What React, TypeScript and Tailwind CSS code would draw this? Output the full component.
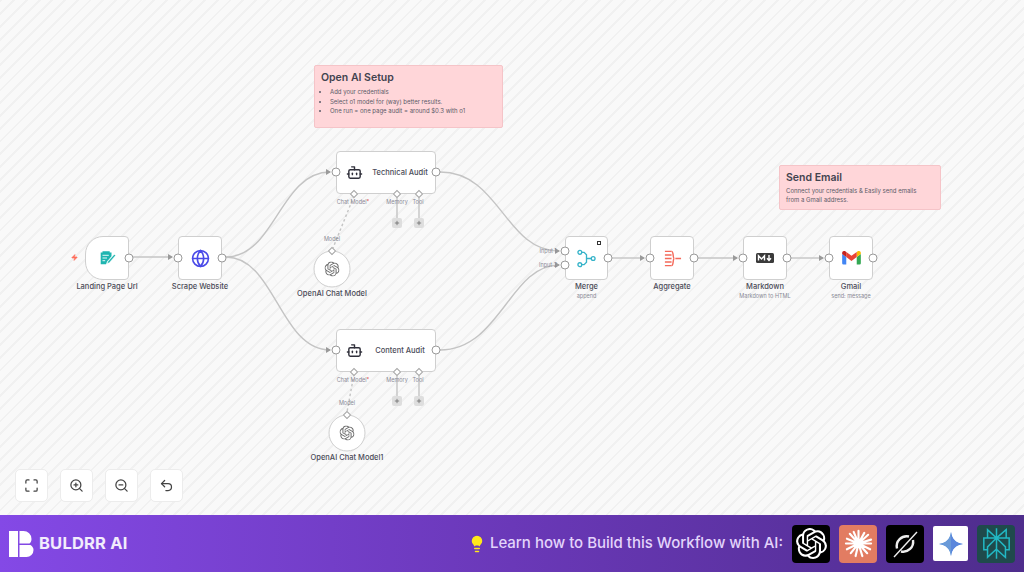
import React from 'react';
import { Maximize, ZoomIn, ZoomOut, Undo2, Plus, Globe, Bot, Zap, Lightbulb } from 'lucide-react';
import { SiOpenai, SiPerplexity } from 'react-icons/si';

const FONT = "font-['Inter','Liberation_Sans',sans-serif]";

const Port = ({ x, y }: { x: number; y: number }) => (
  <div className="absolute w-[9px] h-[9px] rounded-full bg-white border border-[#9a9a9a] -translate-x-1/2 -translate-y-1/2" style={{ left: x, top: y }} />
);

const Diamond = ({ x, y }: { x: number; y: number }) => (
  <div className="absolute w-[6px] h-[6px] rotate-45 bg-white border border-[#a3a3a3] -translate-x-1/2 -translate-y-1/2" style={{ left: x, top: y }} />
);

const Small = ({ x, y, children }: { x: number; y: number; children: React.ReactNode }) => (
  <div className="absolute -translate-x-1/2 -translate-y-1/2 whitespace-nowrap text-[5.5px] text-[#8a8a96]" style={{ left: x, top: y }}>
    {children}
  </div>
);

const Label = ({ x, y, children }: { x: number; y: number; children: React.ReactNode }) => (
  <div className="absolute -translate-x-1/2 -translate-y-1/2 whitespace-nowrap text-[7.5px] font-medium text-[#4b4b58]" style={{ left: x, top: y }}>
    {children}
  </div>
);

const Box = ({ x, w = 44, children, sub, title, first }: { x: number; w?: number; children: React.ReactNode; title: string; sub?: string; first?: boolean }) => (
  <>
    <div
      className={`absolute top-[236px] h-[44px] bg-white border border-[#cfcfcf] flex items-center justify-center ${first ? 'rounded-l-[18px] rounded-r-[4px]' : 'rounded-[4px]'}`}
      style={{ left: x, width: w }}
    >
      {children}
    </div>
    <Label x={x + w / 2} y={287}>{title}</Label>
    {sub && <Small x={x + w / 2} y={296}>{sub}</Small>}
  </>
);

const Audit = ({ y, title }: { y: number; title: string }) => (
  <>
    <div className="absolute left-[336px] w-[100px] h-[43px] bg-white border border-[#cfcfcf] rounded-[4px] flex items-center" style={{ top: y }}>
      <Bot className="w-[17px] h-[17px] ml-[9px] text-[#2f2f3a]" strokeWidth={2} />
      <span className="ml-[8px] flex-1 text-center pr-[6px] text-[7.5px] font-medium text-[#4b4b58]">{title}</span>
    </div>
    <Port x={336} y={y + 21} />
    <Port x={436} y={y + 21} />
    <Diamond x={354} y={y + 43} />
    <Diamond x={397} y={y + 43} />
    <Diamond x={419} y={y + 43} />
    <Small x={353} y={y + 51}>Chat Model<span className="text-[#e5484d]">*</span></Small>
    <Small x={397} y={y + 51}>Memory</Small>
    <Small x={418} y={y + 51}>Tool</Small>
    <div className="absolute w-[10px] h-[10px] rounded-[2px] bg-[#dedede] flex items-center justify-center" style={{ left: 392, top: y + 67 }}>
      <Plus className="w-[6px] h-[6px] text-[#666]" strokeWidth={3} />
    </div>
    <div className="absolute w-[10px] h-[10px] rounded-[2px] bg-[#dedede] flex items-center justify-center" style={{ left: 414, top: y + 67 }}>
      <Plus className="w-[6px] h-[6px] text-[#666]" strokeWidth={3} />
    </div>
  </>
);

const ChatModel = ({ cx, cy, title }: { cx: number; cy: number; title: string }) => (
  <>
    <div className="absolute w-[37px] h-[37px] rounded-full bg-white border border-[#cfcfcf] flex items-center justify-center -translate-x-1/2 -translate-y-1/2" style={{ left: cx, top: cy }}>
      <SiOpenai className="w-[15px] h-[15px] text-[#6b6b6b]" />
    </div>
    <Diamond x={cx} y={cy - 18} />
    <Small x={cx} y={cy - 30}>Model</Small>
    <Label x={cx} y={cy + 25}>{title}</Label>
  </>
);

const ToolButton = ({ children }: { children: React.ReactNode }) => (
  <button className="w-[33px] h-[33px] bg-white border border-[#ececec] rounded-[5px] flex items-center justify-center text-[#444]">
    {children}
  </button>
);

const Edges = () => (
  <svg className="absolute left-0 top-0 w-[1024px] h-[515px]" viewBox="0 0 1024 515" fill="none">
    <g stroke="#c4c4c4" strokeWidth="1.4">
      <path d="M133 257H172" />
      <path d="M226 257C275 257 280 172 330 172" />
      <path d="M226 257C275 257 280 350 330 350" />
      <path d="M440 172C500 172 505 251 559 251" />
      <path d="M440 350C500 350 510 265 559 265" />
      <path d="M612 258H644" />
      <path d="M698 258H737" />
      <path d="M791 258H823" />
      <path d="M397 196V218" />
      <path d="M419 196V218" />
      <path d="M397 374V396" />
      <path d="M419 374V396" />
      <path d="M354 196L333 248" strokeDasharray="2.5 2.5" />
      <path d="M354 374L347 412" strokeDasharray="2.5 2.5" />
    </g>
    <g fill="#9a9a9a">
      <path d="M331 172l-5-3v6z" />
      <path d="M331 350l-5-3v6z" />
      <path d="M173 257l-5-3v6z" />
      <path d="M560 251l-5-3v6z" />
      <path d="M560 265l-5-3v6z" />
      <path d="M645 258l-5-3v6z" />
      <path d="M738 258l-5-3v6z" />
      <path d="M824 258l-5-3v6z" />
    </g>
  </svg>
);

export default function App() {
  return (
    <div className={`w-[1024px] h-[572px] flex flex-col overflow-hidden ${FONT}`}>
      <div className="relative flex-1 bg-[#f8f8f8] bg-[repeating-linear-gradient(135deg,#f1f1f1_0px,#f1f1f1_2px,#f9f9f9_2px,#f9f9f9_9px)]">
        {/* sticky notes */}
        <div className="absolute left-[314px] top-[65px] w-[189px] h-[63px] bg-[#ffd6d9] border border-[#f5c4c8] rounded-[2px] pl-[6px] pt-[5px]">
          <div className="text-[10.5px] leading-[13px] font-semibold text-[#43434f]">Open AI Setup</div>
          <ul className="mt-[3px] ml-[9px] list-disc text-[6px] leading-[9.5px] text-[#5b5b68]">
            <li>Add your credentials</li>
            <li>Select o1 model for (way) better results.</li>
            <li>One run = one page audit = around $0.3 with o1</li>
          </ul>
        </div>
        <div className="absolute left-[779px] top-[165px] w-[162px] h-[45px] bg-[#ffd6d9] border border-[#f5c4c8] rounded-[2px] pl-[6px] pt-[5px]">
          <div className="text-[10.5px] leading-[13px] font-semibold text-[#43434f]">Send Email</div>
          <div className="mt-[3px] text-[6px] leading-[8.5px] text-[#5b5b68]">
            Connect your credentials &amp; Easily send emails<br />from a Gmail address.
          </div>
        </div>

        <Edges />

        <Zap className="absolute left-[71px] top-[254px] w-[7px] h-[7px] text-[#ff6d5a] fill-[#ff6d5a]" />

        <Box x={85} title="Landing Page Url" first>
          <svg viewBox="0 0 20 20" className="w-[18px] h-[18px]">
            <path d="M3 4h2V2.5h8V4h2v4l-5 6-1 3H3z" fill="#1fb5b0" />
            <path d="M5 7h7M5 10h5M5 13h3" stroke="#fff" strokeWidth="1" />
            <path d="M11 14l7-8 1.5 1.2-7 8-2.3 1z" fill="#1fb5b0" stroke="#fff" strokeWidth=".5" />
          </svg>
        </Box>
        <Box x={178} title="Scrape Website">
          <Globe className="w-[19px] h-[19px] text-[#4a4ae8]" strokeWidth={2} />
        </Box>
        <Box x={565} w={43} title="Merge" sub="append">
          <svg viewBox="0 0 20 20" className="w-[19px] h-[19px]" fill="none" stroke="#35b3c9" strokeWidth="1.4">
            <circle cx="3" cy="3.5" r="2" />
            <circle cx="3" cy="16.5" r="2" />
            <circle cx="17" cy="10" r="2" />
            <path d="M5 3.5h2.5L10 6v8l-2.5 2.5H5M10 10h5" />
          </svg>
          <div className="absolute right-[6px] top-[4px] w-[4px] h-[4px] border border-[#333]" />
        </Box>
        <Box x={650} title="Aggregate">
          <svg viewBox="0 0 20 20" className="w-[19px] h-[19px]" fill="none" stroke="#f4695a" strokeWidth="1.5">
            <path d="M2 2.5h7M2 6.3h7M2 10h7M2 13.7h7M2 17.5h7" />
            <path d="M9 2.5c2.5 0 1 7.5 3 7.5-2 0-.5 7.5-3 7.5M13 10h6" />
          </svg>
        </Box>
        <Box x={743} title="Markdown" sub="Markdown to HTML">
          <div className="w-[18px] h-[10px] rounded-[1.5px] bg-[#3a3a3a] flex items-center justify-center">
            <svg viewBox="0 0 18 10" className="w-[18px] h-[10px]" fill="none" stroke="#fff" strokeWidth="1.4">
              <path d="M2.5 7.5V2.7L5.5 6l3-3.3v4.8M13 2v5M11 5.3l2 2.2 2-2.2" />
            </svg>
          </div>
        </Box>
        <Box x={829} title="Gmail" sub="send: message">
          <svg viewBox="0 0 20 15" className="w-[19px] h-[14px]" fill="none">
            <path d="M1.4 14.5H4.4V6.5L0 3.2V13a1.4 1.4 0 0 0 1.4 1.5z" fill="#4285f4" />
            <path d="M15.6 14.5h3a1.4 1.4 0 0 0 1.4-1.5V3.2l-4.4 3.3z" fill="#34a853" />
            <path d="M15.6 1v5.5L20 3.2V2C20 .3 18 -.6 16.700 .4z" fill="#fbbc04" />
            <path d="M4.400 6.500V1L10 5.200 15.600 1v5.500L10 10.700z" fill="#ea4335" />
            <path d="M0 2v1.200l4.400 3.300V1L3.300 .4C2 -.6 0 .3 0 2z" fill="#c5221f" />
          </svg>
        </Box>

        <Port x={129} y={258} />
        <Port x={178} y={258} />
        <Port x={222} y={258} />
        <Port x={565} y={251} />
        <Port x={565} y={265} />
        <Port x={608} y={258} />
        <Port x={650} y={258} />
        <Port x={694} y={258} />
        <Port x={743} y={258} />
        <Port x={787} y={258} />
        <Port x={829} y={258} />
        <Port x={873} y={258} />
        <Small x={548} y={251}>Input 1</Small>
        <Small x={548} y={265}>Input 2</Small>

        <Audit y={151} title="Technical Audit" />
        <Audit y={329} title="Content Audit" />
        <ChatModel cx={332} cy={269} title="OpenAI Chat Model" />
        <ChatModel cx={347} cy={433} title="OpenAI Chat Model1" />

        <div className="absolute left-[15px] top-[469px] flex gap-[12px]">
          <ToolButton><Maximize className="w-[15px] h-[15px]" /></ToolButton>
          <ToolButton><ZoomIn className="w-[15px] h-[15px]" /></ToolButton>
          <ToolButton><ZoomOut className="w-[15px] h-[15px]" /></ToolButton>
          <ToolButton><Undo2 className="w-[15px] h-[15px]" /></ToolButton>
        </div>
      </div>

      <div className="h-[57px] shrink-0 flex items-center bg-linear-to-r from-[#8449e6] via-[#6a38b8] to-[#4e2d8c] pl-[9px] pr-[9px]">
        <svg viewBox="0 0 25 26" className="w-[25px] h-[26px]" fill="#fff">
          <path d="M0 0h9v26H0zM10.500 0h4A8 8 0 0 1 22.500 8c0 2-.8 3.500-2 4.500H10.500z" />
          <path d="M10.500 14h11c1.800 1 3 3 3 5a7 7 0 0 1-7 7h-7z" />
        </svg>
        <span className="ml-[5px] text-[16.500px] font-bold tracking-[0.2px] text-white/90">BULDRR AI</span>
        <div className="ml-auto flex items-center">
          <Lightbulb className="w-[18px] h-[18px] text-[#ffe81a] fill-[#ffe81a]" />
          <span className="ml-[4px] text-[15px] font-medium text-[#e3d4fb]">Learn how to Build this Workflow with AI:</span>
          <div className="ml-[9px] flex items-center gap-[9px]">
            <div className="w-[38px] h-[38px] rounded-[4px] bg-black flex items-center justify-center">
              <SiOpenai className="w-[31px] h-[31px] text-white" />
            </div>
            <div className="w-[38px] h-[38px] rounded-[4px] bg-[#e27c62] flex items-center justify-center">
              <svg viewBox="0 0 30 30" className="w-[29px] h-[29px]" stroke="#fff" strokeWidth="2.200" strokeLinecap="round">
                <path d="M15 15V2M15 15l6-11M15 15l10-9M15 15l13-4M15 15h13M15 15l12 6M15 15l9 10M15 15l4 13M15 15l-3 13M15 15l-8 10M15 15l-12 6M15 15H2M15 15L3 10M15 15L6 5M15 15L10 3" />
              </svg>
            </div>
            <div className="w-[38px] h-[38px] rounded-[4px] bg-black flex items-center justify-center">
              <svg viewBox="0 0 30 30" className="w-[30px] h-[30px]" fill="none" stroke="#eee" strokeWidth="2.400">
                <path d="M19 7.500A10 10 0 0 0 7 19.500M11 22.500A10 10 0 0 0 23 11" />
                <path d="M27 3L4 28" strokeWidth="1.400" />
              </svg>
            </div>
            <div className="w-[35px] h-[35px] rounded-[2px] bg-white flex items-center justify-center">
              <svg viewBox="0 0 24 24" className="w-[24px] h-[24px]">
                <path d="M12 0C12.800 7 17 11.200 24 12 17 12.800 12.800 17 12 24 11.200 17 7 12.800 0 12 7 11.200 11.200 7 12 0z" fill="#4f8fe0" />
                <path d="M12 0C12.800 7 17 11.200 24 12 17 12.800 12.800 17 12 24z" fill="#5a86dc" />
                <path d="M12 0C11.200 7 7 11.200 0 12 7 12.800 11.200 17 12 24z" fill="#6a9ad8" />
              </svg>
            </div>
            <div className="w-[38px] h-[38px] rounded-[4px] bg-[#1f4a4c] flex items-center justify-center">
              <SiPerplexity className="w-[31px] h-[31px] text-[#22b8c4]" />
            </div>
          </div>
        </div>
      </div>
    </div>
  );
}
